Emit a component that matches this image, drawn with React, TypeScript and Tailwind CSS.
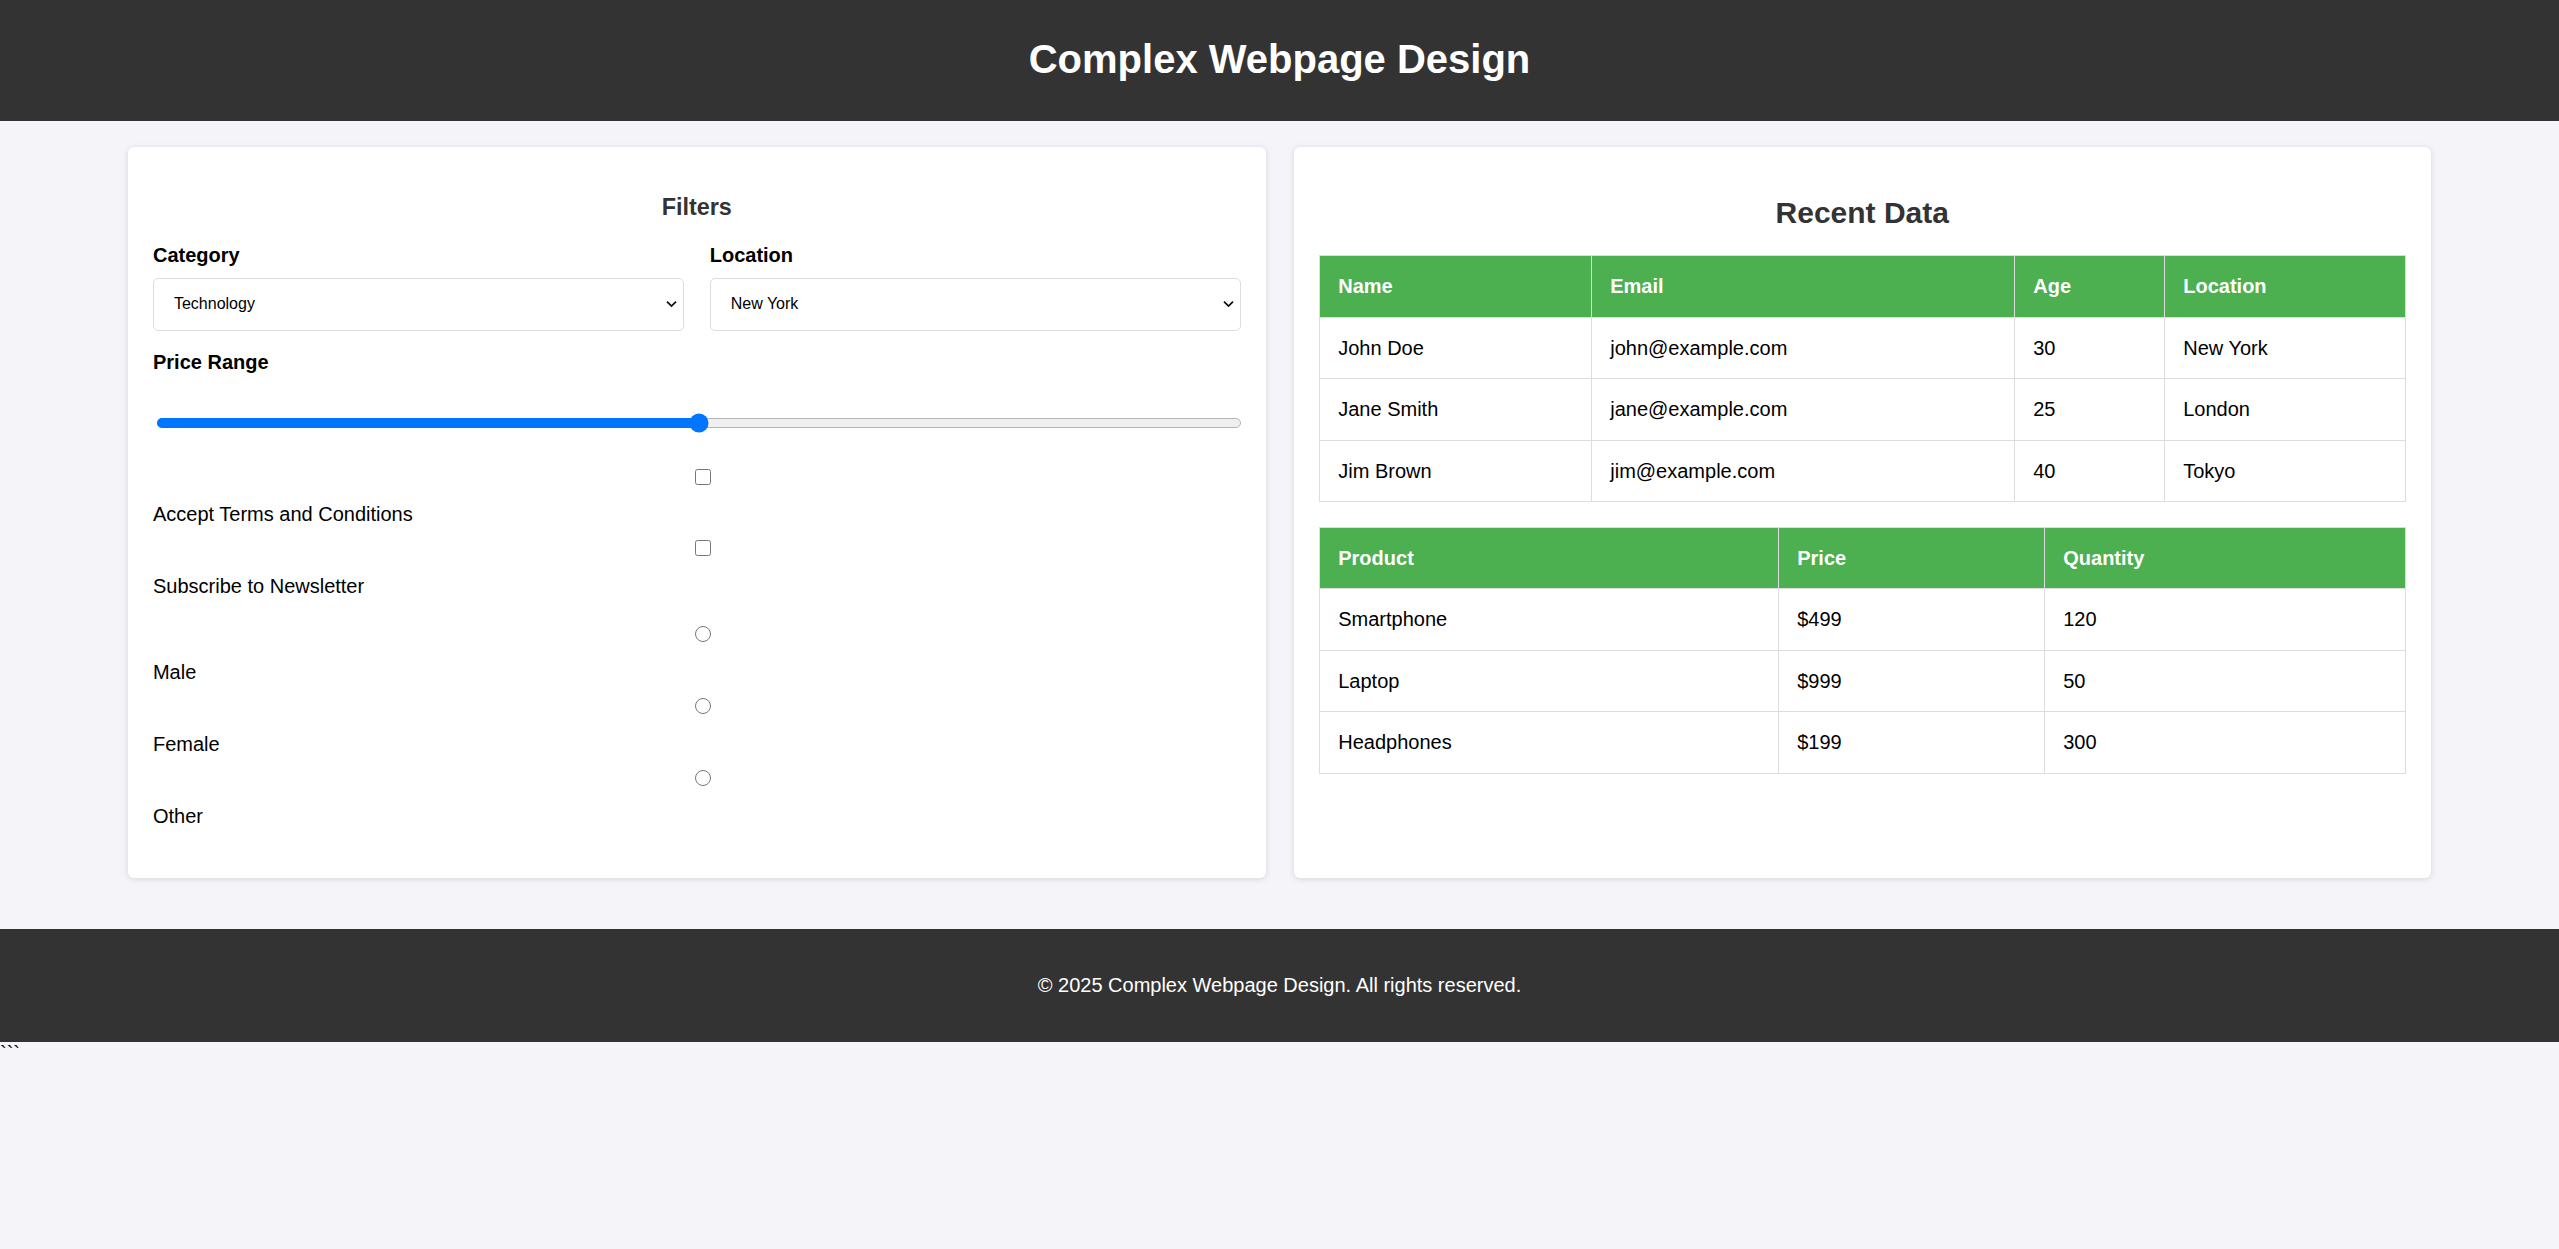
import React from "react"

const users = [
  { name: "John Doe", email: "john@example.com", age: 30, location: "New York" },
  { name: "Jane Smith", email: "jane@example.com", age: 25, location: "London" },
  { name: "Jim Brown", email: "jim@example.com", age: 40, location: "Tokyo" },
]

const products = [
  { product: "Smartphone", price: "$499", qty: 120 },
  { product: "Laptop", price: "$999", qty: 50 },
  { product: "Headphones", price: "$199", qty: 300 },
]

function Chevron() {
  return (
    <svg
      className="pointer-events-none absolute right-[7px] top-1/2 -translate-y-1/2"
      width="11"
      height="7"
      viewBox="0 0 11 7"
      fill="none"
    >
      <path d="M1 1.2 L5.5 5.6 L10 1.2" stroke="#111" strokeWidth="1.8" />
    </svg>
  )
}

function SelectField({ label, value, options }: { label: string; value: string; options: string[] }) {
  return (
    <div>
      <label className="mb-[10.5px] block font-bold leading-[23px]">{label}</label>
      <div className="relative">
        <select
          defaultValue={value}
          className="block h-[53px] w-full appearance-none rounded-[5px] border border-[#ddd] bg-white pl-[20px] text-[16px] text-black outline-none"
        >
          {options.map((o) => (
            <option key={o}>{o}</option>
          ))}
        </select>
        <Chevron />
      </div>
    </div>
  )
}

function Box({ round }: { round?: boolean }) {
  // native-looking checkbox / radio, centered like a width:100% input
  return (
    <div className="flex h-[16px] justify-center pl-[12px]">
      <input
        type={round ? "radio" : "checkbox"}
        name={round ? "gender" : undefined}
        className={`m-0 h-[16px] w-[16px] appearance-none border-[1.3px] border-[#767676] bg-white ${
          round ? "rounded-full" : "rounded-[2.5px]"
        }`}
      />
    </div>
  )
}

export default function App() {
  return (
    <div className="min-h-screen bg-[#f4f4f9] font-['Liberation_Sans',Arial,sans-serif] text-[20px] text-black">
      <header className="flex h-[121px] items-center justify-center bg-[#333] pb-[3px]">
        <h1 className="text-[40px] font-bold leading-[46px] text-white">Complex Webpage Design</h1>
      </header>

      <main className="mx-auto flex w-[90%] items-stretch gap-[28px] pb-[51px] pt-[26px]">
        {/* Filters card */}
        <section className="flex-1 rounded-[6px] bg-white p-[25px] shadow-[0_1px_6px_rgba(0,0,0,0.13)]">
          <h3 className="mb-[23.4px] mt-[22px] text-center text-[23.4px] font-bold leading-[27px] text-[#333]">
            Filters
          </h3>

          <div className="grid grid-cols-2 gap-x-[26px]">
            <SelectField label="Category" value="Technology" options={["Technology", "Health", "Finance"]} />
            <SelectField label="Location" value="New York" options={["New York", "London", "Tokyo"]} />
          </div>

          <label className="mt-[20px] block font-bold leading-[23px]">Price Range</label>
          <div className="mt-[29px] flex h-[40px] items-center pl-[4px]">
            <div className="relative h-[10px] w-full">
              <div className="absolute inset-0 rounded-full border border-[#b5b5b5] bg-[#efefef]" />
              <div className="absolute inset-y-0 left-0 w-1/2 rounded-l-full bg-[#0075ff]" />
              <div className="absolute left-1/2 top-1/2 h-[19px] w-[19px] -translate-x-1/2 -translate-y-1/2 rounded-full bg-[#0075ff]" />
            </div>
          </div>

          <div className="mt-[26px]">
            <Box />
          </div>
          <label className="mt-[18.5px] block leading-[23px]">Accept Terms and Conditions</label>
          <div className="mt-[13.5px]">
            <Box />
          </div>
          <label className="mt-[19px] block leading-[23px]">Subscribe to Newsletter</label>

          <div className="mt-[28.5px]">
            <Box round />
          </div>
          <label className="mt-[18.5px] block leading-[23px]">Male</label>
          <div className="mt-[14px]">
            <Box round />
          </div>
          <label className="mt-[19.5px] block leading-[23px]">Female</label>
          <div className="mt-[13.5px]">
            <Box round />
          </div>
          <label className="mb-[24.5px] mt-[19.5px] block leading-[23px]">Other</label>
        </section>

        {/* Data card */}
        <section className="flex-1 rounded-[6px] bg-white p-[25px] shadow-[0_1px_6px_rgba(0,0,0,0.13)]">
          <h2 className="mb-[24.9px] mt-[24px] text-center text-[30px] font-bold leading-[34.5px] text-[#333]">
            Recent Data
          </h2>

          <table className="w-full table-fixed border-collapse">
            <colgroup>
              <col className="w-[272px]" />
              <col className="w-[423px]" />
              <col className="w-[150px]" />
              <col />
            </colgroup>
            <thead>
              <tr className="bg-[#4caf50] text-white">
                {["Name", "Email", "Age", "Location"].map((h) => (
                  <th key={h} className="border border-[#ddd] p-[18.75px] text-left font-bold leading-[23px]">
                    {h}
                  </th>
                ))}
              </tr>
            </thead>
            <tbody>
              {users.map((u) => (
                <tr key={u.email}>
                  <td className="border border-[#ddd] p-[18.75px] leading-[23px]">{u.name}</td>
                  <td className="border border-[#ddd] p-[18.75px] leading-[23px]">{u.email}</td>
                  <td className="border border-[#ddd] p-[18.75px] leading-[23px]">{u.age}</td>
                  <td className="border border-[#ddd] p-[18.75px] leading-[23px]">{u.location}</td>
                </tr>
              ))}
            </tbody>
          </table>

          <table className="mt-[24.5px] w-full table-fixed border-collapse">
            <colgroup>
              <col className="w-[459px]" />
              <col className="w-[266px]" />
              <col />
            </colgroup>
            <thead>
              <tr className="bg-[#4caf50] text-white">
                {["Product", "Price", "Quantity"].map((h) => (
                  <th key={h} className="border border-[#ddd] p-[18.75px] text-left font-bold leading-[23px]">
                    {h}
                  </th>
                ))}
              </tr>
            </thead>
            <tbody>
              {products.map((p) => (
                <tr key={p.product}>
                  <td className="border border-[#ddd] p-[18.75px] leading-[23px]">{p.product}</td>
                  <td className="border border-[#ddd] p-[18.75px] leading-[23px]">{p.price}</td>
                  <td className="border border-[#ddd] p-[18.75px] leading-[23px]">{p.qty}</td>
                </tr>
              ))}
            </tbody>
          </table>
        </section>
      </main>

      <footer className="flex h-[113px] items-center justify-center bg-[#333] text-white">
        <p className="leading-[23px]">© 2025 Complex Webpage Design. All rights reserved.</p>
      </footer>
      <div className="leading-[23px]">```</div>
    </div>
  )
}
